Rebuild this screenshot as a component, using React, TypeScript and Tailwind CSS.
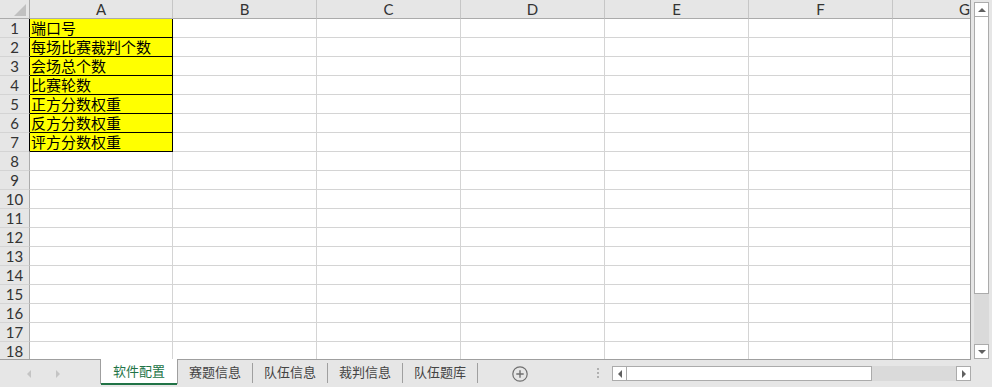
import React from "react";

const columns = ["A", "B", "C", "D", "E", "F", "G"];

const settings: Record<number, string> = {
  1: "端口号",
  2: "每场比赛裁判个数",
  3: "会场总个数",
  4: "比赛轮数",
  5: "正方分数权重",
  6: "反方分数权重",
  7: "评方分数权重",
};

const sheets = ["赛题信息", "队伍信息", "裁判信息", "队伍题库"];

const rows = Array.from({ length: 18 }, (_, i) => i + 1);

function Triangle({ dir, className }: { dir: "up" | "down" | "left" | "right"; className?: string }) {
  const points = {
    up: "0,4 4,0 8,4",
    down: "0,0 8,0 4,4",
    left: "4,0 4,8 0,4",
    right: "0,0 0,8 4,4",
  }[dir];
  const box = dir === "up" || dir === "down" ? "0 0 8 4" : "0 0 4 8";
  const size = dir === "up" || dir === "down" ? { w: 8, h: 4 } : { w: 4, h: 8 };
  return (
    <svg width={size.w} height={size.h} viewBox={box} className={className}>
      <polygon points={points} fill="currentColor" />
    </svg>
  );
}

function ScrollButton({ dir }: { dir: "up" | "down" | "left" | "right" }) {
  return (
    <div className="w-[15px] h-[15px] shrink-0 bg-white border border-[#ababab] flex items-center justify-center text-[#606060]">
      <Triangle dir={dir} />
    </div>
  );
}

function Sheet() {
  return (
    <div className="w-[971px] h-[359px] overflow-hidden bg-white border-r border-[#9b9b9b]">
      <div className="grid w-[1038px] grid-cols-[30px_143px_repeat(6,144px)] auto-rows-[19px]">
        {/* header row */}
        <div className="relative bg-[#e6e6e6] border-r border-b border-[#ababab]">
          <svg width="12" height="12" viewBox="0 0 12 12" className="absolute right-[3px] bottom-[2px]">
            <polygon points="12,0 12,12 0,12" fill="#c0c0c0" />
          </svg>
        </div>
        {columns.map((c) => (
          <div
            key={c}
            className="bg-[#e6e6e6] border-r border-r-[#c6c6c6] border-b border-b-[#ababab] text-center text-[15px] leading-[18px] text-[#333]"
          >
            {c}
          </div>
        ))}

        {rows.map((r) => {
          const label = settings[r];
          return (
            <React.Fragment key={r}>
              <div
                className={`bg-[#e6e6e6] border-b border-b-[#d4d4d4] border-r text-center text-[15px] leading-[18px] text-[#333] ${
                  label ? "border-r-black" : "border-r-[#ababab]"
                }`}
              >
                {r}
              </div>
              {columns.map((c) =>
                c === "A" && label ? (
                  <div
                    key={c}
                    className="bg-[#ffff00] border-r border-b border-black pl-[1px] text-[15px] leading-[19px] text-black whitespace-nowrap overflow-hidden"
                  >
                    {label}
                  </div>
                ) : (
                  <div key={c} className="border-r border-b border-[#d4d4d4]" />
                )
              )}
            </React.Fragment>
          );
        })}
      </div>
    </div>
  );
}

function VerticalScroll() {
  return (
    <div className="flex-1 flex flex-col pl-[3px] pt-[2px]">
      <ScrollButton dir="up" />
      <div className="w-[15px] h-[277px] bg-white border-x border-b border-[#ababab]" />
      <div className="w-[15px] flex-1 bg-[#dadada]" />
      <ScrollButton dir="down" />
    </div>
  );
}

function TabBar() {
  return (
    <div className="flex h-[28px]">
      <div className="w-[100px] border-t border-[#9f9f9f] flex items-center pl-[27px] gap-[25px] text-[#c4c4c4]">
        <Triangle dir="left" />
        <Triangle dir="right" />
      </div>
      <div className="w-[78px] bg-white border-x border-[#9f9f9f] h-[25px] relative flex justify-center pt-[3px] text-[13px] leading-[18px] text-[#217346]">
        软件配置
        <div className="absolute left-0 right-0 bottom-[-1px] h-[2px] bg-[#217346]" />
      </div>
      <div className="w-[793px] border-t border-[#9f9f9f] flex items-start text-[13px] text-[#444]">
        {sheets.map((s) => (
          <div key={s} className="flex items-start">
            <div className="px-[11px] pt-[3px] leading-[18px]">{s}</div>
            <div className="w-px h-[20px] mt-[3px] bg-[#9f9f9f]" />
          </div>
        ))}
        <svg width="16" height="16" viewBox="0 0 16 16" className="ml-[34px] mt-[6px] text-[#6f6f6f]">
          <circle cx="8" cy="8" r="7.2" fill="none" stroke="currentColor" strokeWidth="1.2" />
          <path d="M8 4.3v7.4M4.3 8h7.4" stroke="currentColor" strokeWidth="1.4" />
        </svg>
        <div className="flex-1" />
        <div className="flex flex-col gap-[2px] mt-[8px] mr-[13px]">
          <div className="w-[2px] h-[2px] bg-[#b0b0b0]" />
          <div className="w-[2px] h-[2px] bg-[#b0b0b0]" />
          <div className="w-[2px] h-[2px] bg-[#b0b0b0]" />
        </div>
        <div className="w-[359px] flex mt-[6px]">
          <ScrollButton dir="left" />
          <div className="w-[245px] h-[15px] bg-white border-y border-r border-[#ababab]" />
          <div className="flex-1 h-[15px] bg-[#dadada]" />
          <ScrollButton dir="right" />
        </div>
      </div>
    </div>
  );
}

export default function App() {
  return (
    <div
      className="w-[992px] h-[387px] bg-[#e6e6e6] overflow-hidden flex flex-col"
      style={{ fontFamily: 'Lato, "Noto Sans CJK SC", sans-serif' }}
    >
      <div className="flex h-[359px]">
        <Sheet />
        <VerticalScroll />
      </div>
      <TabBar />
    </div>
  );
}
